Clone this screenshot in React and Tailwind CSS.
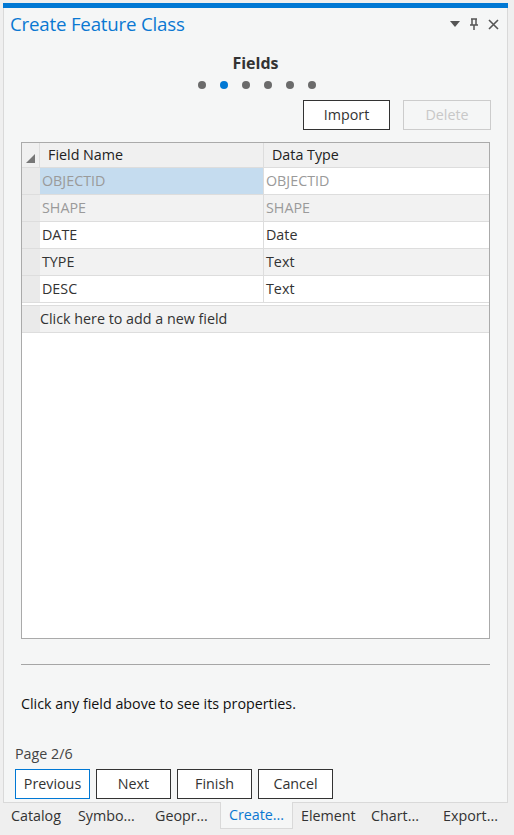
import React from "react";

// rows of the fields grid
const rows = [
  { name: "OBJECTID", type: "OBJECTID", locked: true, selected: true },
  { name: "SHAPE", type: "SHAPE", locked: true },
  { name: "DATE", type: "Date" },
  { name: "TYPE", type: "Text" },
  { name: "DESC", type: "Text" },
];

const tabs = [
  { label: "Catalog", w: "w-[67px]" },
  { label: "Symbo...", w: "w-[77px]" },
  { label: "Geopr...", w: "w-[65px]" },
  { label: "Create...", w: "w-[73px]", active: true },
  { label: "Element", w: "w-[78px] pl-[8px]" },
  { label: "Chart...", w: "w-[72px]" },
  { label: "Export...", w: "w-[70px]" },
];

function Dots() {
  return (
    <div className="flex justify-center gap-[14px] mt-[7px] ml-[2px]">
      {[0, 1, 2, 3, 4, 5].map((i) => (
        <span
          key={i}
          className={`block w-[8px] h-[8px] rounded-full ${i == 1 ? "bg-[#0078d4]" : "bg-[#6b6b6b]"}`}
        />
      ))}
    </div>
  );
}

export default function App() {
  return (
    <div
      className="w-[514px] h-[835px] bg-[#efefef] pt-[3px] flex flex-col text-[#333] text-[14.3px]"
      style={{ fontFamily: '"Open Sans", "Noto Sans", sans-serif' }}
    >
      <div className="ml-[3px] w-[505px] h-[800px] flex flex-col bg-[#f5f6f6] border-x border-b border-[#d9d9d9]">
        <div className="h-[5px] bg-[#0078d4] -mx-px" />
        {/* title bar */}
        <div className="flex items-center h-[32px] pl-[6px] pr-[8px]">
          <span className="text-[18.7px] text-[#0a78d2] tracking-[-0.2px]">Create Feature Class</span>
          <div className="ml-auto flex items-center gap-[9px] text-[#555]">
            <svg width="10" height="6" viewBox="0 0 10 6">
              <path d="M0 0h10L5 6z" fill="#555" />
            </svg>
            <svg width="10" height="12" viewBox="0 0 10 12">
              <path d="M2 1h6M3 1v6M7 1v6M1 7h8M5 7v5" stroke="#555" strokeWidth="1.5" fill="none" />
            </svg>
            <svg width="11" height="11" viewBox="0 0 11 11">
              <path d="M1 1l9 9M10 1l-9 9" stroke="#555" strokeWidth="1.6" />
            </svg>
          </div>
        </div>

        <div className="text-center font-bold text-[16px] text-[#333] mt-[12px] leading-[22px]">Fields</div>
        <Dots />

        <div className="flex justify-end gap-[13px] pr-[16px] mt-[11px]">
          <button className="w-[87px] h-[30px] border border-[#333] bg-white text-[#333]">Import</button>
          <button className="w-[88px] h-[30px] border border-[#ccc] bg-[#f5f6f6] text-[#c8c8c8]">Delete</button>
        </div>

        {/* fields grid */}
        <div className="mx-[17px] mt-[12px] h-[497px] border border-[#aaa] bg-white flex flex-col">
          <div className="flex h-[25px] bg-[#f0f0f0] border-b border-[#ddd]">
            <div className="w-[18px] flex items-end justify-center pb-[4px] border-r border-[#ddd]">
              <svg width="9" height="9" viewBox="0 0 9 9">
                <path d="M9 0V9H0z" fill="#777" />
              </svg>
            </div>
            <div className="w-[224px] pl-[8px] flex items-center border-r border-[#ddd] text-[#222]">Field Name</div>
            <div className="w-[223px] pl-[8px] flex items-center text-[#222]">Data Type</div>
          </div>
          {rows.map((r, i) => (
            <div key={r.name} className={`flex h-[27px] border-b border-[#ddd] ${i % 2 == 1 ? "bg-[#f2f2f2]" : "bg-white"}`}>
              <div className="w-[18px] bg-[#eaeaea]" />
              <div
                className={`w-[224px] pl-[2px] flex items-center border-r border-[#ddd] ${r.selected ? "bg-[#c5dcef]" : ""} ${r.locked ? "text-[#9a9a9a]" : "text-[#333]"}`}
              >
                {r.name}
              </div>
              <div className={`w-[223px] pl-[2px] flex items-center ${r.locked ? "text-[#9a9a9a]" : "text-[#333]"}`}>{r.type}</div>
            </div>
          ))}
          <div className="h-[3px] border-b border-[#ddd]" />
          <div className="flex h-[27px] bg-[#f2f2f2] border-b border-[#ddd]">
            <div className="w-[18px] bg-[#eaeaea]" />
            <div className="flex items-center text-[#333]">Click here to add a new field</div>
          </div>
        </div>

        <div className="mx-[17px] mt-[25px] border-t border-[#a6a6a6]" />
        <div className="ml-[17px] mt-[28px] text-[#111]">Click any field above to see its properties.</div>

        <div className="ml-[11px] mt-[29px] text-[#444]">Page 2/6</div>
        <div className="flex gap-[6px] ml-[11px] mt-[4px]">
          <button className="w-[75px] h-[30px] border border-[#0078d4] bg-white text-[#333]">Previous</button>
          <button className="w-[75px] h-[30px] border border-[#333] bg-white text-[#333]">Next</button>
          <button className="w-[75px] h-[30px] border border-[#333] bg-white text-[#333]">Finish</button>
          <button className="w-[75px] h-[30px] border border-[#333] bg-white text-[#333]">Cancel</button>
        </div>
      </div>

      {/* dock tabs */}
      <div className="flex pl-[11px] h-[26px] text-[#333]">
        {tabs.map((t) =>
          t.active ? (
            <div key={t.label} className={`${t.w} -mt-px bg-[#f5f6f6] border-x border-b border-[#d9d9d9] text-[#0a78d2] flex items-center justify-center`}>
              {t.label}
            </div>
          ) : (
            <div key={t.label} className={`${t.w} flex items-center`}>
              {t.label}
            </div>
          )
        )}
      </div>
    </div>
  );
}
